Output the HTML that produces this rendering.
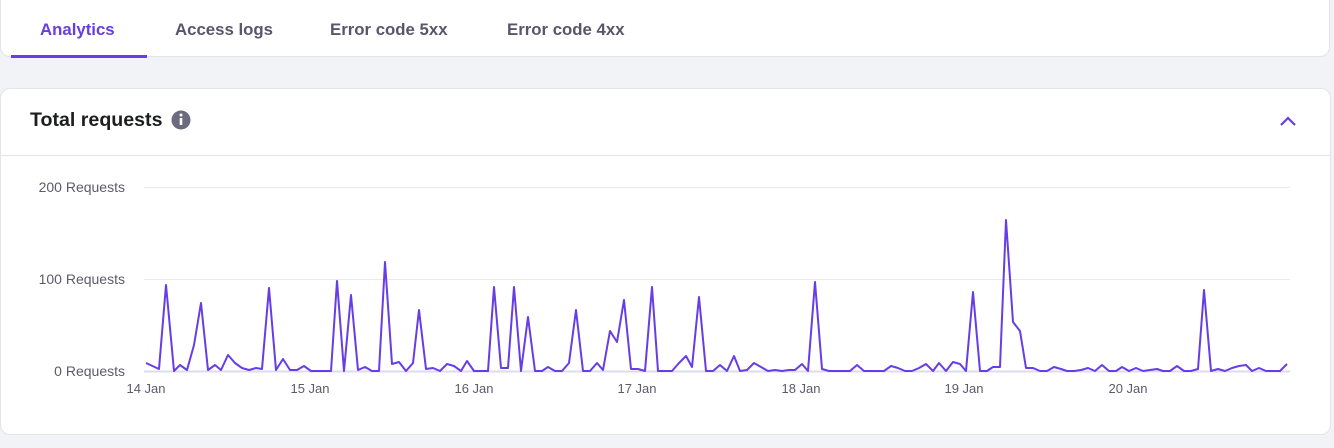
<!DOCTYPE html>
<html><head><meta charset="utf-8"><style>
html,body{margin:0;padding:0;width:1334px;height:448px;background:#f2f3f6;overflow:hidden;font-family:"Liberation Sans",sans-serif}
.tabs{position:absolute;left:0;top:-10px;width:1330px;height:67px;background:#fff;border:1px solid #e3e3ea;border-radius:10px;box-sizing:border-box}
.tab{position:absolute;top:20px;font-size:16.8px;font-weight:bold;color:#58566a}
.act{color:#673de6}
.ul{position:absolute;left:11px;top:55px;width:136px;height:3px;background:#673de6}
.card{position:absolute;left:0;top:88px;width:1331px;height:347px;background:#fff;border:1px solid #e3e3ea;border-radius:10px;box-sizing:border-box}
.title{position:absolute;left:30px;top:109px;font-size:19.6px;font-weight:bold;color:#1d1e20}
.hr{position:absolute;left:1px;top:155px;width:1329px;height:1px;background:#e3e3ea}
svg{position:absolute;left:0;top:0}
</style></head><body>
<div class="tabs"></div>
<div class="tab act" style="left:40px">Analytics</div>
<div class="tab" style="left:175px">Access logs</div>
<div class="tab" style="left:330px">Error code 5xx</div>
<div class="tab" style="left:507px">Error code 4xx</div>
<div class="ul"></div>
<div class="card"></div>
<div class="title">Total requests</div>
<div class="hr"></div>
<svg width="1334" height="448">
<circle cx="181" cy="120" r="9.5" fill="#6d6b7e"/>
<rect x="179.7" y="118" width="2.6" height="7" fill="#fff"/><circle cx="181" cy="115" r="1.5" fill="#fff"/>
<path d="M1281 125 L1288 118 L1295 125" fill="none" stroke="#673de6" stroke-width="2.2"/>
<g stroke="#e9e9ee" stroke-width="1"><line x1="144" y1="187.5" x2="1290" y2="187.5"/><line x1="144" y1="279.5" x2="1290" y2="279.5"/></g>
<line x1="144" y1="371.5" x2="1290" y2="371.5" stroke="#dcdcf0" stroke-width="2"/>
<g font-size="14" fill="#5c5b6a" text-anchor="end"><text x="125" y="192">200 Requests</text><text x="125" y="284">100 Requests</text><text x="125" y="376">0 Requests</text></g>
<g font-size="13" fill="#5c5b6a" text-anchor="middle"><text x="146" y="393">14 Jan</text><text x="310" y="393">15 Jan</text><text x="474" y="393">16 Jan</text><text x="637" y="393">17 Jan</text><text x="801" y="393">18 Jan</text><text x="964" y="393">19 Jan</text><text x="1128" y="393">20 Jan</text></g>
<polyline fill="none" stroke="#673de6" stroke-width="2" stroke-linejoin="round" points="146,363 159,369 166,285 174,371 180,365 187,370 194,345 201,303 208,370 215,365 221,370 228,355 235,363 242,368 249,370 256,368 262,369 269,288 276,370 283,359 290,370 297,370 304,366 311,371 318,371 331,371 337,281 344,371 351,295 358,370 365,367 372,371 379,371 385,262 392,364 399,362 406,371 413,363 419,310 426,369 433,368 440,371 447,364 454,366 461,371 467,361 474,371 481,371 488,371 494,287 501,368 508,368 514,287 521,371 528,317 535,371 542,371 548,367 555,371 562,371 569,363 576,310 583,371 590,371 597,363 603,370 610,331 617,342 624,300 631,369 638,369 645,371 652,287 658,371 665,371 672,371 679,363 686,356 692,367 699,297 706,371 713,371 720,365 727,371 734,356 740,371 747,370 754,363 761,367 768,371 775,370 782,371 789,370 795,370 802,364 808,371 815,282 822,369 829,371 836,371 843,371 850,371 857,365 864,371 870,371 877,371 884,371 891,366 898,368 905,371 912,371 919,368 926,364 933,371 939,363 946,371 953,362 960,364 966,371 973,292 980,371 987,371 993,367 1000,367 1006,220 1013,322 1020,331 1026,368 1033,368 1040,371 1047,371 1054,367 1061,369 1067,371 1074,371 1081,370 1088,368 1095,371 1102,365 1109,371 1116,371 1122,367 1129,371 1136,368 1143,371 1150,370 1157,369 1163,371 1170,371 1177,366 1184,371 1191,371 1198,369 1204,290 1211,371 1218,369 1225,371 1232,368 1239,366 1246,365 1252,371 1259,368 1266,371 1273,371 1280,371 1287,364"/>
</svg>
</body></html>
